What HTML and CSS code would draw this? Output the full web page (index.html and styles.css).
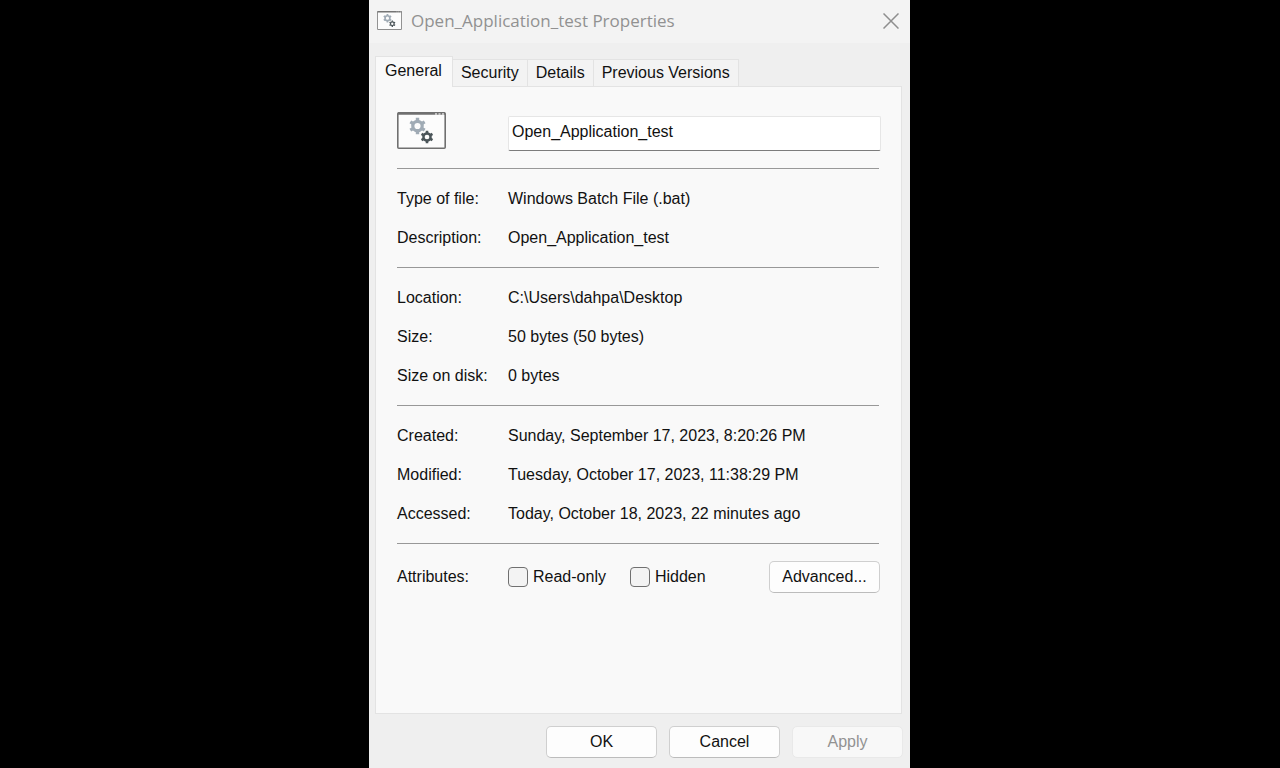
FILE: index.html
```html
<!DOCTYPE html>
<html lang="en">
<head>
<meta charset="utf-8">
<meta name="viewport" content="width=device-width, initial-scale=1">
<title>Open_Application_test Properties</title>
<link rel="stylesheet" href="styles.css">
</head>
<body>
<svg class="defs" width="0" height="0" aria-hidden="true">
  <defs>
    <g id="gear" fill="none" stroke="currentColor">
      <circle r="4.7" stroke-width="3.2"/>
      <g stroke-width="3.4">
        <path d="M0-5.2V-8.300M0 5.2V8.300"/>
        <path d="M0-5.2V-8.300M0 5.2V8.300" transform="rotate(60)"/>
        <path d="M0-5.2V-8.300M0 5.2V8.300" transform="rotate(120)"/>
      </g>
    </g>
    <symbol id="batch" viewBox="0 0 49 37">
      <rect x=".8" y=".8" width="47.400" height="35.400" rx="1" fill="#fcfcfc" stroke="#707070" stroke-width="1.600"/>
      <path d="M1 1.500H48" stroke="#707070" stroke-width="2.600"/>
      <path d="M38 2h2M41.500 2h2M45 2h2" stroke="#ddd" stroke-width="1.500"/>
      <g transform="translate(20.500 14)" color="#a0abb5"><use href="#gear"/></g>
      <g transform="translate(30 25) scale(.76)" color="#4b5559"><use href="#gear"/></g>
    </symbol>
  </defs>
</svg>
<main class="dialog">
  <header class="titlebar">
    <svg class="title-icon" aria-hidden="true"><use href="#batch"/></svg>
    <h1 class="title">Open_Application_test Properties</h1>
    <button class="close" type="button" aria-label="Close">
      <svg viewBox="0 0 16 16" width="16" height="16" fill="none" stroke="#8e8e8e" stroke-width="1.500"><path d="M.5.5l15 15M15.500.5l-15 15"/></svg>
    </button>
  </header>
  <nav class="tabs" role="tablist">
    <button class="tab tab-active" type="button" role="tab" aria-selected="true">General</button>
    <button class="tab" type="button" role="tab" aria-selected="false">Security</button>
    <button class="tab" type="button" role="tab" aria-selected="false">Details</button>
    <button class="tab" type="button" role="tab" aria-selected="false">Previous Versions</button>
  </nav>
  <section class="panel" role="tabpanel">
    <div class="name-row">
      <svg class="file-icon" aria-hidden="true"><use href="#batch"/></svg>
      <input class="name" type="text" value="Open_Application_test" aria-label="File name">
    </div>
    <dl class="group">
      <dt>Type of file:</dt><dd>Windows Batch File (.bat)</dd>
      <dt>Description:</dt><dd>Open_Application_test</dd>
    </dl>
    <dl class="group">
      <dt>Location:</dt><dd>C:\Users\dahpa\Desktop</dd>
      <dt>Size:</dt><dd>50 bytes (50 bytes)</dd>
      <dt>Size on disk:</dt><dd>0 bytes</dd>
    </dl>
    <dl class="group">
      <dt>Created:</dt><dd>Sunday, September 17, 2023, 8:20:26 PM</dd>
      <dt>Modified:</dt><dd>Tuesday, October 17, 2023, 11:38:29 PM</dd>
      <dt>Accessed:</dt><dd>Today, October 18, 2023, 22 minutes ago</dd>
    </dl>
    <div class="attributes" role="group" aria-labelledby="attr">
      <span id="attr">Attributes:</span>
      <div class="options">
        <label class="option"><input class="check" type="checkbox">Read-only</label>
        <label class="option"><input class="check" type="checkbox">Hidden</label>
        <button class="button advanced" type="button">Advanced...</button>
      </div>
    </div>
  </section>
  <footer class="actions">
    <button class="button" type="button">OK</button>
    <button class="button" type="button">Cancel</button>
    <button class="button" type="button" disabled>Apply</button>
  </footer>
</main>
</body>
</html>
```
FILE: styles.css
```css
* { box-sizing: border-box; }

body {
  margin: 0;
  padding-right: 1px;
  background: #000;
  color: #111;
  font: 16px/24px "Liberation Sans", Arial, sans-serif;
}

button, input { font: inherit; color: inherit; }

.defs { position: absolute; }

.dialog {
  display: flex;
  flex-direction: column;
  max-width: 541px;
  min-height: 100vh;
  margin: 0 auto;
  background: #efefef;
}

.titlebar {
  display: flex;
  align-items: center;
  gap: 9px;
  height: 43px;
  padding: 0 11px 2px 8px;
  background: #f3f3f3;
}

.title-icon { width: 25px; height: 19px; }

.title {
  flex: 1;
  margin: 0;
  color: #919191;
  font: 17px/24px "Open Sans", "Noto Sans", sans-serif;
}

.close {
  display: flex;
  padding: 0;
  border: 0;
  background: none;
}

.tabs {
  display: flex;
  align-items: flex-end;
  padding: 13px 6px 0;
}

.tab {
  height: 27px;
  padding: 1px 8px;
  border: 1px solid #e3e3e3;
  border-width: 1px 1px 0 0;
  background: #f3f3f3;
  line-height: 24px;
}

.tab-active {
  height: 31px;
  margin-bottom: -1px;
  padding: 0 10px 2px 9px;
  border-left-width: 1px;
  background: #f9f9f9;
  z-index: 1;
}

.panel {
  flex: 1;
  margin: 0 8px 0 6px;
  padding: 25px 22px 25px 21px;
  border: 1px solid #e3e3e3;
  background: #f9f9f9;
}

.name-row, .attributes {
  display: grid;
  grid-template-columns: 111px 1fr;
}

.name-row { padding-bottom: 17px; }

.file-icon { width: 49px; height: 37px; }

.name {
  height: 35px;
  margin: 4px -2px 0 0;
  padding: 0 3px 3px;
  border: 1px solid #e6e6e6;
  border-bottom-color: #7c7c7c;
  border-radius: 2px;
  background: #fff;
}

.group {
  display: grid;
  grid-template-columns: 111px 1fr;
  margin: 0;
  padding: 10px 0;
  border-top: 1px solid #989898;
  line-height: 39px;
}

.group dd { margin: 0; }

.attributes {
  align-items: center;
  padding-top: 17px;
  border-top: 1px solid #989898;
}

.options, .option { display: flex; align-items: center; }

.options { gap: 24px; }

.option { gap: 5px; }

.check {
  appearance: none;
  width: 20px;
  height: 20px;
  margin: 0;
  border: 1px solid #707070;
  border-radius: 4px;
  background: #f3f3f3;
}

.button {
  width: 111px;
  height: 32px;
  padding: 0;
  border: 1px solid #cfcfcf;
  border-bottom-color: #bcbcbc;
  border-radius: 5px;
  background: #fdfdfd;
}

.button:disabled {
  border-color: #e9e9e9;
  background: #f8f8f8;
  color: #929292;
}

.advanced { margin-left: auto; margin-right: -1px; }

.actions {
  display: flex;
  justify-content: flex-end;
  gap: 12px;
  padding: 12px 7px 10px;
}
```
